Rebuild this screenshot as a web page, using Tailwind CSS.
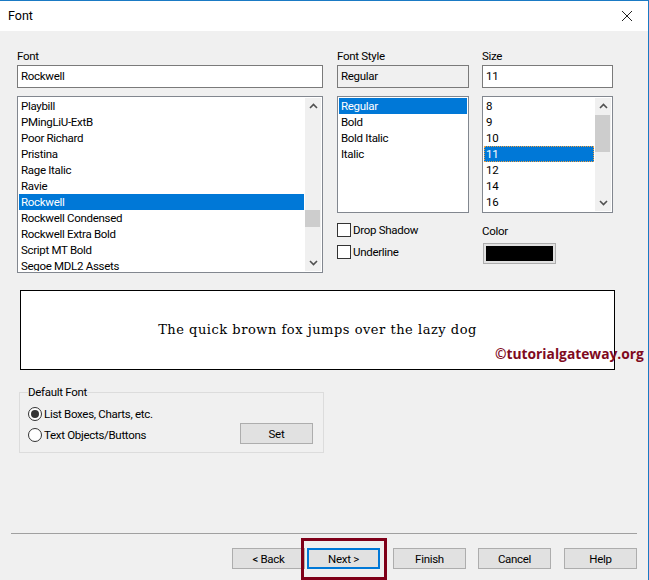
<!DOCTYPE html>
<html lang="en">
<head>
  <meta charset="UTF-8" />
  <title>Font</title>
  <script src="https://cdn.jsdelivr.net/npm/@tailwindcss/browser@4"></script>
</head>
<body class="bg-[#f0f0f0] overflow-hidden">

<div class="relative w-[649px] h-[580px] flex flex-col bg-[#f0f0f0] border-t border-r border-[#1a7ac4] text-[11.5px] tracking-[-0.3px] leading-[16px] text-black font-['Roboto',sans-serif]">

  <!-- Title bar -->
  <div class="h-[30px] shrink-0 bg-white flex items-center justify-between pl-[8px] pr-[15px]">
    <span class="text-[12.5px] tracking-normal">Font</span>
    <svg width="12" height="12" viewBox="0 0 12 12" fill="none" stroke="#222" stroke-width="1"><path d="M1 1L11 11M11 1L1 11"/></svg>
  </div>

  <!-- Font / style / size pickers -->
  <div class="flex h-[242px] pl-[17px] pt-[18px] shrink-0">
    <div class="w-[306px]">
      <label class="block h-[16px] leading-[15px]">Font</label>
      <div class="h-[23px] border border-[#7a7a7a] bg-white px-[3px] pb-[1px] flex items-center">Rockwell</div>
      <div class="relative mt-[8px] h-[177px] border border-[#82878f] bg-white p-[1px] flex">
        <ul class="flex-1 mr-[1px] overflow-hidden">
          <li class="h-[16px] px-[2px]">Playbill</li>
          <li class="h-[16px] px-[2px]">PMingLiU-ExtB</li>
          <li class="h-[16px] px-[2px]">Poor Richard</li>
          <li class="h-[16px] px-[2px]">Pristina</li>
          <li class="h-[16px] px-[2px]">Rage Italic</li>
          <li class="h-[16px] px-[2px]">Ravie</li>
          <li class="h-[16px] px-[2px] bg-[#0078d7] text-white">Rockwell</li>
          <li class="h-[16px] px-[2px]">Rockwell Condensed</li>
          <li class="h-[16px] px-[2px]">Rockwell Extra Bold</li>
          <li class="h-[16px] px-[2px]">Script MT Bold</li>
          <li class="h-[16px] px-[2px]">Segoe MDL2 Assets</li>
        </ul>
        <div class="w-[16px] bg-[#f0f0f0] flex flex-col items-center justify-between py-[5px] relative">
          <svg width="9" height="6" viewBox="0 0 9 6" fill="none" stroke="#505050" stroke-width="1.6"><path d="M1 5L4.5 1.5L8 5"/></svg>
          <div class="absolute left-0 top-[112px] w-[15px] h-[17px] bg-[#cdcdcd]"></div>
          <svg width="9" height="6" viewBox="0 0 9 6" fill="none" stroke="#505050" stroke-width="1.6"><path d="M1 1L4.5 4.5L8 1"/></svg>
        </div>
      </div>
    </div>

    <div class="w-[132px] ml-[14px]">
      <label class="block h-[16px] leading-[15px]">Font Style</label>
      <div class="h-[23px] border border-[#7a7a7a] bg-[#f0f0f0] px-[3px] pb-[1px] flex items-center">Regular</div>
      <ul class="mt-[8px] h-[117px] border border-[#82878f] bg-white p-[1px]">
        <li class="h-[16px] px-[2px] bg-[#0078d7] text-white">Regular</li>
        <li class="h-[16px] px-[2px]">Bold</li>
        <li class="h-[16px] px-[2px]">Bold Italic</li>
        <li class="h-[16px] px-[2px]">Italic</li>
      </ul>
      <label class="mt-[10px] h-[14px] flex items-center gap-[2px]">
        <span class="w-[14px] h-[14px] border border-[#333] bg-white"></span>Drop Shadow
      </label>
      <label class="mt-[8px] h-[14px] flex items-center gap-[2px]">
        <span class="w-[14px] h-[14px] border border-[#333] bg-white"></span>Underline
      </label>
    </div>

    <div class="w-[131px] ml-[13px]">
      <label class="block h-[16px] leading-[15px]">Size</label>
      <div class="h-[23px] border border-[#7a7a7a] bg-white px-[3px] pb-[1px] flex items-center">11</div>
      <div class="mt-[8px] h-[117px] border border-[#82878f] bg-white p-[1px] flex">
        <ul class="flex-1 mr-[1px] overflow-hidden">
          <li class="h-[16px] px-[2px]">8</li>
          <li class="h-[16px] px-[2px]">9</li>
          <li class="h-[16px] px-[2px]">10</li>
          <li class="h-[16px] px-[2px] bg-[#0078d7] text-white outline-1 -outline-offset-1 outline-dotted outline-[#f0a040]">11</li>
          <li class="h-[16px] px-[2px]">12</li>
          <li class="h-[16px] px-[2px]">14</li>
          <li class="h-[16px] px-[2px]">16</li>
        </ul>
        <div class="w-[16px] bg-[#f0f0f0] flex flex-col items-center justify-between py-[5px] relative">
          <svg width="9" height="6" viewBox="0 0 9 6" fill="none" stroke="#505050" stroke-width="1.6"><path d="M1 5L4.5 1.5L8 5"/></svg>
          <div class="absolute left-0 top-[17px] w-[15px] h-[37px] bg-[#cdcdcd]"></div>
          <svg width="9" height="6" viewBox="0 0 9 6" fill="none" stroke="#505050" stroke-width="1.6"><path d="M1 1L4.5 4.5L8 1"/></svg>
        </div>
      </div>
      <label class="block mt-[10px] h-[16px]">Color</label>
      <div class="mt-[4px] ml-[1px] w-[73px] h-[21px] border border-[#adadad] bg-[#e1e1e1] p-[2px]">
        <div class="h-full bg-black"></div>
      </div>
    </div>
  </div>

  <!-- Preview -->
  <div class="ml-[20px] mt-[17px] w-[595px] h-[80px] shrink-0 border border-black bg-white flex items-center justify-center font-['DejaVu_Serif',serif] text-[13px] tracking-[0.52px]">
    The quick brown fox jumps over the lazy dog
  </div>

  <!-- Default font group -->
  <fieldset class="ml-[19px] mt-[14px] w-[305px] h-[69px] shrink-0 border border-[#dcdcdc] pl-[8px] pr-[10px] flex justify-between">
    <legend class="h-[16px]">Default Font</legend>
    <div class="flex flex-col gap-[5px] pt-[6px]">
      <label class="flex items-center gap-[2px] h-[16px]">
        <span class="w-[14px] h-[14px] rounded-full border border-[#333] bg-white flex items-center justify-center"><span class="w-[8px] h-[8px] rounded-full bg-[#333]"></span></span>List Boxes, Charts, etc.
      </label>
      <label class="flex items-center gap-[2px] h-[16px]">
        <span class="w-[14px] h-[14px] rounded-full border border-[#333] bg-white"></span>Text Objects/Buttons
      </label>
    </div>
    <button class="self-start mt-[23px] w-[73px] h-[21px] border border-[#adadad] bg-[#e1e1e1]">Set</button>
  </fieldset>

  <!-- Footer -->
  <div class="mt-auto pb-[11px] shrink-0">
    <div class="ml-[11px] w-[626px] border-t border-[#a0a0a0]"></div>
    <div class="mt-[14px] ml-[232px] flex">
      <button class="w-[73px] h-[21px] border border-[#adadad] bg-[#e1e1e1]">&lt; Back</button>
      <button class="w-[73px] h-[21px] ml-[2px] border-2 border-[#0078d7] bg-[#e1e1e1]">Next &gt;</button>
      <button class="w-[73px] h-[21px] ml-[13px] border border-[#adadad] bg-[#e1e1e1]">Finish</button>
      <button class="w-[73px] h-[21px] ml-[12px] border border-[#adadad] bg-[#e1e1e1]">Cancel</button>
      <button class="w-[73px] h-[21px] ml-[13px] border border-[#adadad] bg-[#e1e1e1]">Help</button>
    </div>
  </div>

  <!-- Annotations on top of the screenshot -->
  <span class="absolute left-[495px] top-[344px] font-['Open_Sans',sans-serif] font-bold text-[13.8px] tracking-normal leading-[18px] text-[#7f0a1e]">©tutorialgateway.org</span>
  <div class="absolute left-[301px] top-[537px] w-[86px] h-[42px] border-[3px] border-[#7f0019]"></div>
</div>

</body>
</html>
